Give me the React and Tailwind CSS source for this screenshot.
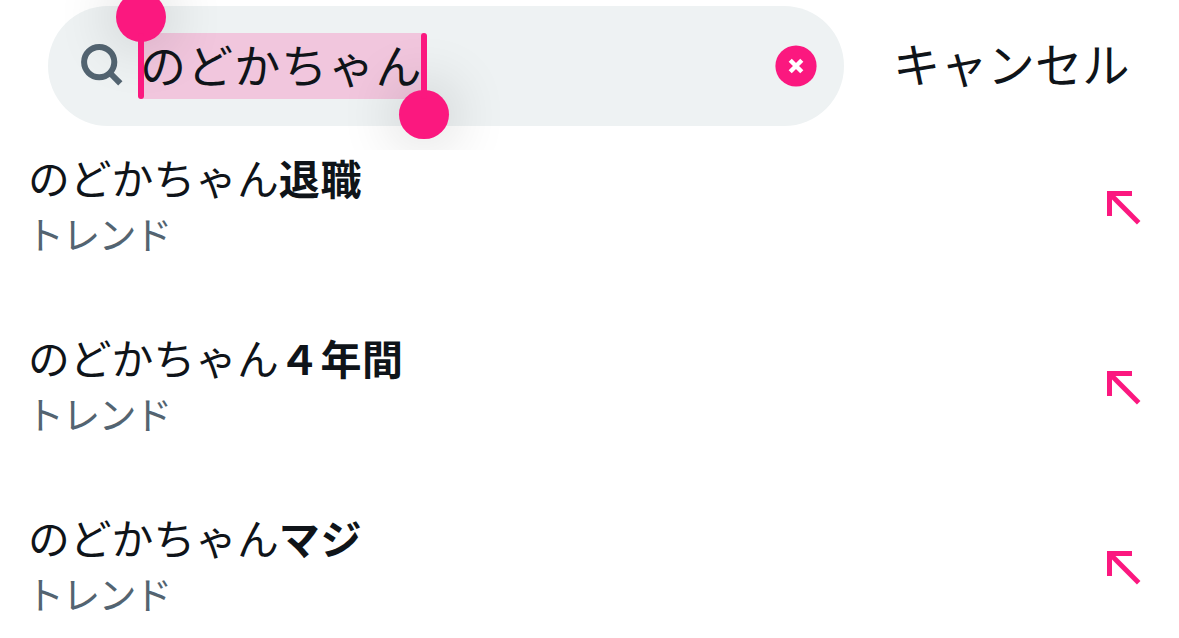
const suggestions = [
  { id: 1, query: 'のどかちゃん', rest: '退職' },
  { id: 2, query: 'のどかちゃん', rest: '４年間' },
  { id: 3, query: 'のどかちゃん', rest: 'マジ' },
];

function SearchIcon() {
  return (
    <svg className="w-[42px] h-[42px] shrink-0 overflow-visible" viewBox="0 0 42 42" fill="none" stroke="#536471">
      <circle cx="18.2" cy="17.1" r="15.1" strokeWidth="6" />
      <path d="M28.5 27.5L39.3 38.3" strokeWidth="6" />
    </svg>
  );
}

function ClearIcon() {
  return (
    <svg className="w-[42px] h-[42px]" viewBox="0 0 42 42">
      <circle cx="21" cy="21" r="20.6" fill="#fb187f" />
      <path d="M15.2 15.2L26.8 26.8M26.8 15.2L15.2 26.8" stroke="#fff" strokeWidth="4.4" />
    </svg>
  );
}

function ArrowIcon() {
  return (
    <svg className="w-[34px] h-[34px]" viewBox="0 0 34 34" fill="none" stroke="#fb187f" strokeWidth="5">
      <path d="M25 2.5H2.5V25" />
      <path d="M3.5 3.5L31.7 31.7" />
    </svg>
  );
}

// Highlighted text with the two drag handles on its edges
function SelectedText({ children }) {
  return (
    <div className="relative ml-[18px] w-[283px] h-[66px] bg-[#f1c6dd]">
      <div className="absolute -left-[25px] -top-[41px] w-[50px] h-[50px] rounded-full bg-[#fb187f] shadow-[0_0_60px_rgba(0,0,0,0.24)]"></div>
      <div className="absolute left-[258px] top-[57px] w-[50px] h-[49px] rounded-full bg-[#fb187f] shadow-[0_0_60px_rgba(0,0,0,0.24)]"></div>
      <div className="absolute -left-[3px] top-0 w-1.5 h-[66px] rounded-full bg-[#fb187f]"></div>
      <div className="absolute left-[280px] top-0 w-1.5 h-[66px] rounded-full bg-[#fb187f]"></div>
      <span className="relative -left-px block whitespace-nowrap text-[46px] leading-[60px] tracking-[1.1px] text-[#0f1419]">
        {children}
      </span>
    </div>
  );
}

export default function App() {
  return (
    <div className="w-full h-screen overflow-hidden bg-white font-['Noto_Sans_CJK_JP',sans-serif]">
      {/* Search bar */}
      <header className="flex items-start h-[150px] pt-1.5 pl-12 overflow-hidden">
        <div className="flex items-center w-[796px] h-[120px] pl-[33px] pr-[27px] rounded-full bg-[#eef2f3]">
          <SearchIcon />
          <SelectedText>のどかちゃん</SelectedText>
          <button className="ml-auto">
            <ClearIcon />
          </button>
        </div>
        <button className="ml-[49px] h-[120px] pb-[5px] whitespace-nowrap text-[47.3px] text-[#0f1419]">
          キャンセル
        </button>
      </header>

      {/* Suggestions */}
      <ul>
        {suggestions.map((s) => (
          <li key={s.id} className="flex items-start justify-between h-[180px] pl-[28px] pr-[38px]">
            <div>
              <p className="h-[57px] whitespace-nowrap text-[41.8px] leading-[55px] text-[#0f1419]">
                {s.query}
                <span className="font-bold text-[41px] tracking-[0.6px]">{s.rest}</span>
              </p>
              <p className="h-[52px] -ml-0.5 text-[38px] leading-[52px] tracking-[-1.8px] text-[#536471]">トレンド</p>
            </div>
            <button className="mt-[41px]">
              <ArrowIcon />
            </button>
          </li>
        ))}
      </ul>
    </div>
  );
}
